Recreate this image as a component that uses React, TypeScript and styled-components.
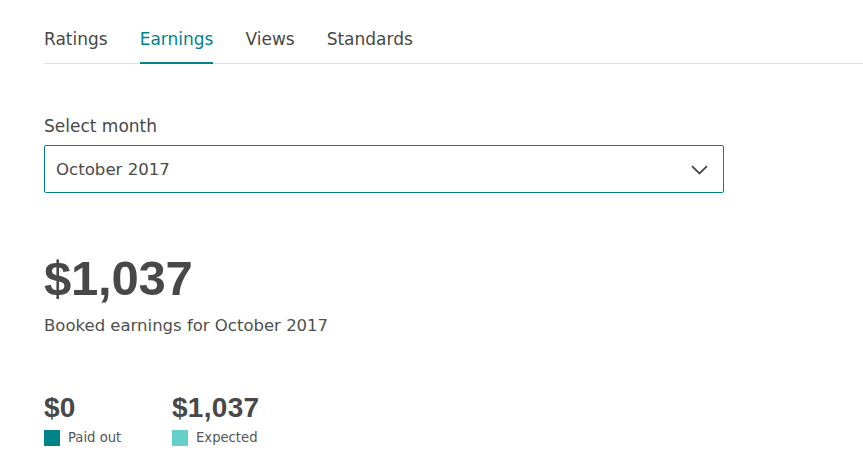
import styled, { createGlobalStyle } from 'styled-components'

const GlobalStyle = createGlobalStyle`
   html, body {
      margin: 0;
      padding: 0;
      background: #ffffff;
   }
   body {
      font-family: 'DejaVu Sans', 'Liberation Sans', sans-serif;
      color: #484848;
   }
`

const teal = '#008489'

const Page = styled.main`
   padding: 28px 0 0 44px;
   width: 863px;
   box-sizing: border-box;
   overflow: hidden;
`

const Tabs = styled.nav`
   display: flex;
   gap: 32px;
   border-bottom: 1px solid #dce0e0;
`

const Tab = styled.button<{ $active?: boolean }>`
   appearance: none;
   background: none;
   border: none;
   border-bottom: 2px solid ${(p) => (p.$active ? teal : 'transparent')};
   margin: 0 0 -1px;
   padding: 0 0 12px;
   font-family: inherit;
   font-size: 17px;
   line-height: 22px;
   color: ${(p) => (p.$active ? teal : '#484848')};
   cursor: pointer;
`

const Label = styled.label`
   display: block;
   margin-top: 51px;
   font-size: 17px;
   line-height: 22px;
`

const SelectBox = styled.div`
   margin-top: 8px;
   width: 680px;
   height: 48px;
   box-sizing: border-box;
   border: 1px solid ${teal};
   border-radius: 2px;
   display: flex;
   align-items: center;
   justify-content: space-between;
   padding: 2px 15px 0 11px;
`

const SelectValue = styled.span`
   font-size: 16.6px;
   line-height: 22px;
   color: #4a4a4a;
`

const Chevron = () => (
   <svg width="17" height="10" viewBox="0 0 17 10" fill="none">
      <path d="M1 1.2L8.5 8.4L16 1.2" stroke="#484848" strokeWidth="1.8" />
   </svg>
)

const Total = styled.div`
   margin-top: 57px;
   font-family: 'Liberation Sans', Arial, sans-serif;
   font-weight: 700;
   font-size: 49px;
   line-height: 56px;
   letter-spacing: -0.2px;
`

const Caption = styled.p`
   margin: 10px 0 0;
   font-size: 16.5px;
   line-height: 20px;
   color: #4f4f4f;
`

const Stats = styled.div`
   display: flex;
   margin-top: 56px;
`

const Stat = styled.div`
   width: 128px;
`

const Amount = styled.div`
   font-family: 'Liberation Sans', Arial, sans-serif;
   font-weight: 700;
   font-size: 28px;
   line-height: 32px;
   letter-spacing: 0.3px;
`

const Legend = styled.div`
   display: flex;
   align-items: center;
   gap: 8px;
   margin-top: 6px;
   font-size: 13.2px;
   line-height: 16px;
   color: #555555;
`

const Swatch = styled.span<{ $color: string }>`
   width: 16px;
   height: 16px;
   background: ${(p) => p.$color};
`

const tabs = ['Ratings', 'Earnings', 'Views', 'Standards']

const stats = [
   { amount: '$0', label: 'Paid out', color: teal },
   { amount: '$1,037', label: 'Expected', color: '#66cfc8' },
]

const App = () => {
   return (
      <>
         <GlobalStyle />
         <Page>
            <Tabs>
               {tabs.map((t) => (
                  <Tab key={t} $active={t === 'Earnings'}>
                     {t}
                  </Tab>
               ))}
            </Tabs>
            <Label>Select month</Label>
            <SelectBox>
               <SelectValue>October 2017</SelectValue>
               <Chevron />
            </SelectBox>
            <Total>$1,037</Total>
            <Caption>Booked earnings for October 2017</Caption>
            <Stats>
               {stats.map((s) => (
                  <Stat key={s.label}>
                     <Amount>{s.amount}</Amount>
                     <Legend>
                        <Swatch $color={s.color} />
                        {s.label}
                     </Legend>
                  </Stat>
               ))}
            </Stats>
         </Page>
      </>
   )
}

export default App
